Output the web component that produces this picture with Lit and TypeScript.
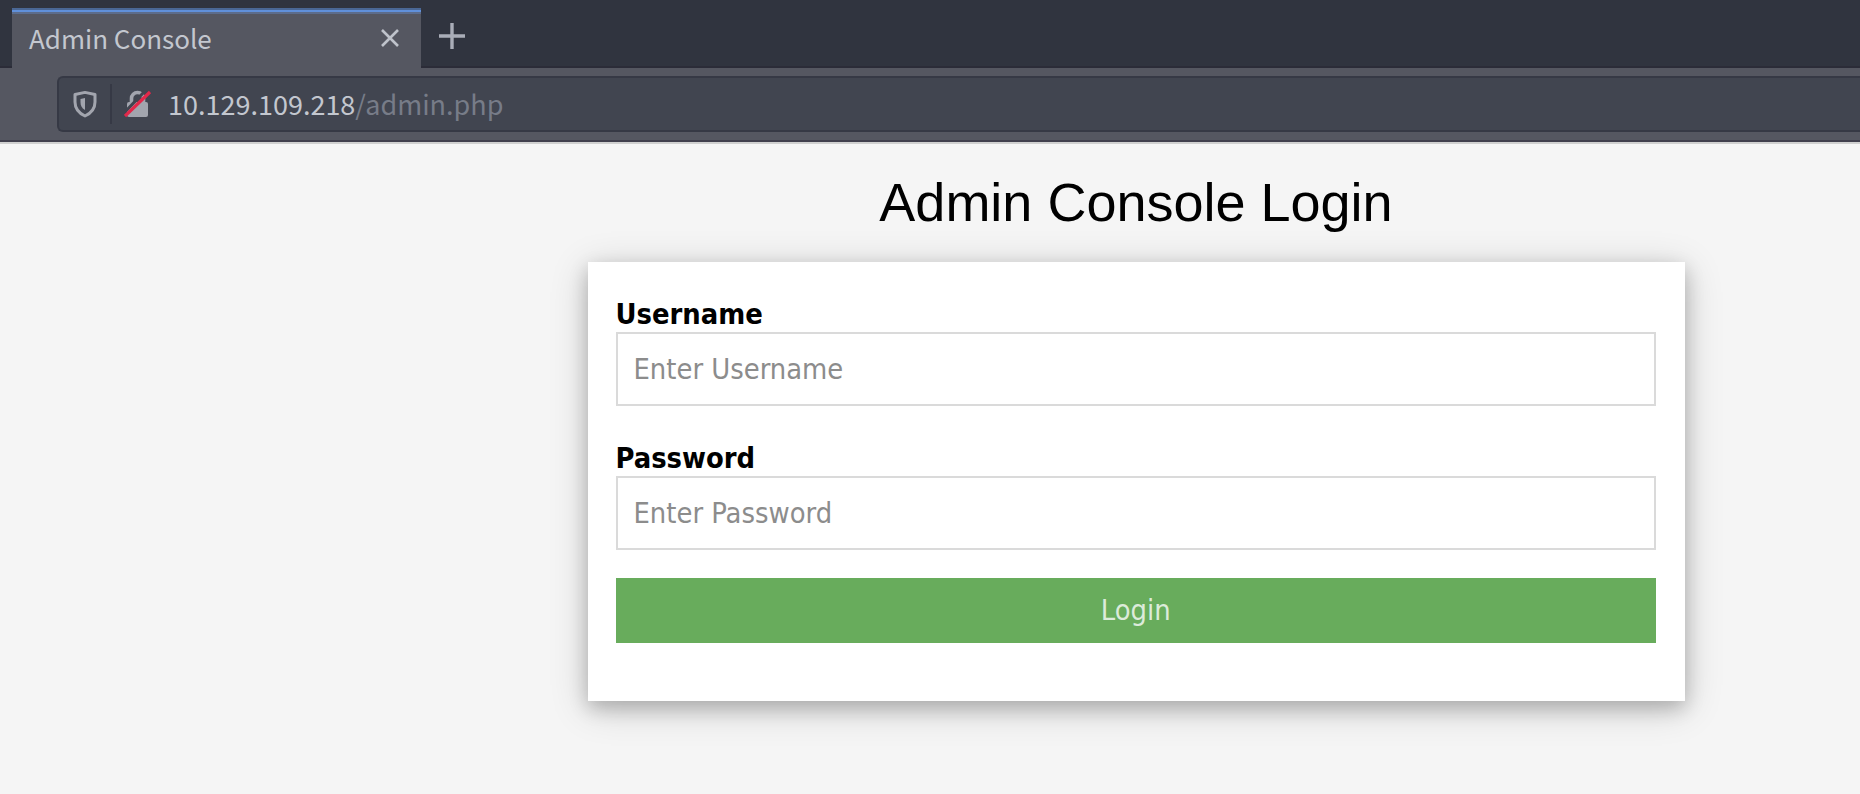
import { LitElement, html, css } from "lit";

class AppRoot extends LitElement {
  static styles = css`
    :host { display: block; height: 794px; background: #f5f5f5; overflow: hidden; font-family: "DejaVu Sans", sans-serif; }
    * { box-sizing: border-box; }
    .tabs { height: 68px; background: #30343f; display: flex; padding: 8px 0 0 12px; box-shadow: inset 0 -2px #2b2c38; }
    .tab { width: 409px; background: linear-gradient(#4a6795 0 2px, #6090da 2px 4px, #5c6c8b 4px 6px, #555761 6px); display: flex; align-items: center; justify-content: space-between; padding: 0 22px 0 17px; font: 26px/1 "Noto Sans CJK SC", sans-serif; color: #c3c7cf; }
    .label { transform-origin: left; white-space: nowrap; line-height: 40px; }
    .plus { width: 28px; height: 28px; margin: 14px 0 0 17px; }
    .bar { height: 74px; background: #555761; padding: 8px 0 12px 57px; border-bottom: 2px solid #413f4d; }
    .url { height: 56px; background: #414550; border: 2px solid #363945; border-right: 0; border-radius: 6px 0 0 6px; display: flex; align-items: center; font: 27px/40px "Noto Sans CJK SC", sans-serif; color: #c3c7cf; }
    .shield { width: 24px; height: 28px; margin-left: 14px; }
    .sep { width: 2px; height: 40px; background: #363945; margin-left: 13px; }
    .lock { width: 28px; height: 28px; margin-left: 12px; }
    .addr { margin-left: 16px; white-space: nowrap; }
    .path { color: #777c88; }
    .page { border-top: 2px solid #d0d0d0; display: flex; flex-direction: column; align-items: center; padding-left: 412px; }
    h1 { margin: 18px 0 0; font: 400 54px/81px "Liberation Sans", sans-serif; color: #000; }
    .page { width: 1860px; }
    .card { width: 1097px; height: 439px; margin-top: 18.5px; background: #fff; padding: 34px 28.5px 0 28px; display: flex; flex-direction: column; box-shadow: 0 7px 18px rgba(0,0,0,.2), 0 7px 36px rgba(0,0,0,.19); }
    label { font: bold 28.8px/36px "DejaVu Sans Condensed", "DejaVu Sans", sans-serif; font-stretch: condensed; color: #000; }
    .field { height: 74px; border: 2px solid #dadada; margin-bottom: 34px; padding: 0 16px; font: 28.8px/70px "DejaVu Sans Condensed", "DejaVu Sans", sans-serif; font-stretch: condensed; color: #8c8c8c; }
    .field.last { margin-bottom: 28px; }
    .btn { height: 65px; background: #68ac5c; color: #dcebda; display: flex; align-items: center; justify-content: center; font: 28.8px/60px "DejaVu Sans Condensed", "DejaVu Sans", sans-serif; font-stretch: condensed; }
  `;
  render() {
    return html`
      <div class="tabs">
        <div class="tab"><span class="label">Admin Console</span>
          <svg width="18" height="18" viewBox="0 0 18 18" stroke="#bfc3cb" stroke-width="2.6"><path d="M1 1L17 17M17 1L1 17"/></svg>
        </div>
        <svg class="plus" viewBox="0 0 28 28" stroke="#a9adb8" stroke-width="3.4"><path d="M1 14H27M14 1V27"/></svg>
      </div>
      <div class="bar"><div class="url">
        <svg class="shield" viewBox="0 0 24 28"><path d="M12 2.4L22 4.5V12C22 18.500 18.500 23 12 26C5.500 23 2 18.500 2 12V4.500Z" fill="none" stroke="#a2a5ae" stroke-width="3" stroke-linejoin="round"/><path d="M12 8V20C8.500 18 7.500 15.500 7.500 12V9Z" fill="#a2a5ae"/></svg>
        <span class="sep"></span>
        <svg class="lock" viewBox="0 0 28 28"><path d="M7.500 13V8.500A6 6 0 0 1 19.500 8.500V13" fill="none" stroke="#a2a5ae" stroke-width="3.600"/><rect x="3" y="12" width="21" height="15" rx="2" fill="#a2a5ae"/><path d="M0 23L22 0" stroke="#414550" stroke-width="3"/><path d="M1 26L26 2" stroke="#e2284a" stroke-width="3.200"/></svg>
        <span class="addr">10.129.109.218<span class="path">/admin.php</span></span>
      </div></div>
      <div class="page">
        <h1>Admin Console Login</h1>
        <div class="card">
          <label>Username</label><div class="field">Enter Username</div>
          <label>Password</label><div class="field last">Enter Password</div>
          <div class="btn">Login</div>
        </div>
      </div>`;
  }
}
customElements.define("app-root", AppRoot);
